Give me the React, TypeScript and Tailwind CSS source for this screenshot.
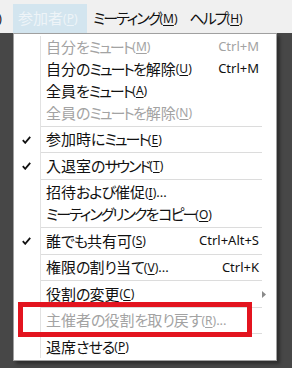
import React from "react";

type Item =
  | { sep: true }
  | {
      sep?: false;
      label: string;
      key: string;
      ellipsis?: boolean;
      shortcut?: string;
      disabled?: boolean;
      checked?: boolean;
      submenu?: boolean;
    };

const items: Item[] = [
  { label: "自分をミュート", key: "M", shortcut: "Ctrl+M", disabled: true },
  { label: "自分のミュートを解除", key: "U", shortcut: "Ctrl+M" },
  { label: "全員をミュート", key: "A" },
  { label: "全員のミュートを解除", key: "N", disabled: true },
  { sep: true },
  { label: "参加時にミュート", key: "E", checked: true },
  { sep: true },
  { label: "入退室のサウンド", key: "T", checked: true },
  { sep: true },
  { label: "招待および催促", key: "I", ellipsis: true },
  { label: "ミーティングリンクをコピー", key: "O" },
  { sep: true },
  { label: "誰でも共有可", key: "S", checked: true, shortcut: "Ctrl+Alt+S" },
  { sep: true },
  { label: "権限の割り当て", key: "V", ellipsis: true, shortcut: "Ctrl+K" },
  { sep: true },
  { label: "役割の変更", key: "C", submenu: true },
  { sep: true },
  { label: "主催者の役割を取り戻す", key: "R", ellipsis: true, disabled: true },
  { sep: true },
  { label: "退席させる", key: "P" },
];

function kind(ch: string): number {
  const c = ch.charCodeAt(0);
  if (c >= 0x30a0 && c <= 0x30ff) return 1;
  if (c >= 0x3040 && c <= 0x309f) return 2;
  return 0;
}

function Ja({ text }: { text: string }) {
  const runs: { k: number; s: string }[] = [];
  for (const ch of text) {
    const k = kind(ch);
    const last = runs[runs.length - 1];
    if (last && last.k === k) last.s += ch;
    else runs.push({ k, s: ch });
  }
  return (
    <span>
      {runs.map((r, i) =>
        r.k === 1 ? (
          <span key={i} className="tracking-[-2px]">{r.s}</span>
        ) : r.k === 2 ? (
          <span key={i} className="tracking-[-1px]">{r.s}</span>
        ) : (
          <span key={i}>{r.s}</span>
        )
      )}
    </span>
  );
}

function Check() {
  return (
    <svg width="9" height="8" viewBox="0 0 9 8">
      <path d="M0.8 4.2 L3.2 6.8 L8.2 0.8" fill="none" stroke="#111" strokeWidth="1.8" strokeLinejoin="miter" />
    </svg>
  );
}

function Mnemonic({ k }: { k: string }) {
  return (
    <span className="text-[12px] tracking-normal">
      (<span className="underline underline-offset-[2px]">{k}</span>)
    </span>
  );
}

export default function App() {
  return (
    <div
      className="relative w-[292px] h-[368px] overflow-hidden flex flex-col bg-[#474747]"
      style={{ fontFamily: '"Noto Sans", "Noto Sans CJK JP", sans-serif' }}
    >
      <div className="h-[33px] bg-[#f0f0f0] flex items-end shrink-0 text-[15px] text-[#111] [font-feature-settings:'palt']">
        <div className="h-[29px] flex items-center ml-[-13px] w-[26px]">
          <span className="text-[12px]">
            (<span className="underline">A</span>)
          </span>
        </div>
        <div className="h-[29px] w-[74px] bg-[#d3e5ef] text-[#eef4f8] flex items-center pl-[5px]">
          <span>参加者</span>
          <Mnemonic k="P" />
        </div>
        <div className="h-[29px] flex items-center pl-[6px]">
          <Ja text="ミーティング" />
          <Mnemonic k="M" />
        </div>
        <div className="h-[29px] flex items-center pl-[12px]">
          <Ja text="ヘルプ" />
          <Mnemonic k="H" />
        </div>
      </div>
      <div className="flex-1 pl-[13px]">
        <div className="w-[264px] bg-white border border-[#a0a0a0] py-[2px] shadow-[3px_3px_3px_rgba(0,0,0,0.35)] text-[15px] [font-feature-settings:'palt']">
          {items.map((it, i) =>
            it.sep ? (
              <div key={i} className="flex h-[4.5px]">
                <div className="w-[27px] border-r border-[#e2e2e2] shrink-0" />
                <div className="flex-1 flex items-center mr-[14px]">
                  <div className="h-px w-full bg-[#dcdcdc]" />
                </div>
              </div>
            ) : (
              <div
                key={i}
                className={
                  "flex items-center h-[22px] " +
                  (it.disabled ? "text-[#a3a3a3]" : "text-[#111]")
                }
              >
                <div className="w-[27px] h-full border-r border-[#e2e2e2] shrink-0 flex items-center justify-center pr-[2px]">
                  {it.checked ? <Check /> : null}
                </div>
                <div className="flex-1 flex items-center pl-[5px] whitespace-nowrap">
                  <Ja text={it.label} />
                  <Mnemonic k={it.key} />
                  {it.ellipsis ? <span className="text-[13px]">...</span> : null}
                </div>
                {it.shortcut ? (
                  <div className="pr-[17px] whitespace-nowrap text-[13px]">{it.shortcut}</div>
                ) : null}
                {it.submenu ? (
                  <div className="pr-[10px]">
                    <svg width="4" height="7" viewBox="0 0 4 7">
                      <polygon points="0,0 4,3.5 0,7" fill="#8a8a8a" />
                    </svg>
                  </div>
                ) : null}
              </div>
            )
          )}
        </div>
      </div>
      <div className="absolute left-[18px] top-[302px] w-[234px] h-[35px] border-[5px] border-[#e3141f]" />
    </div>
  );
}
